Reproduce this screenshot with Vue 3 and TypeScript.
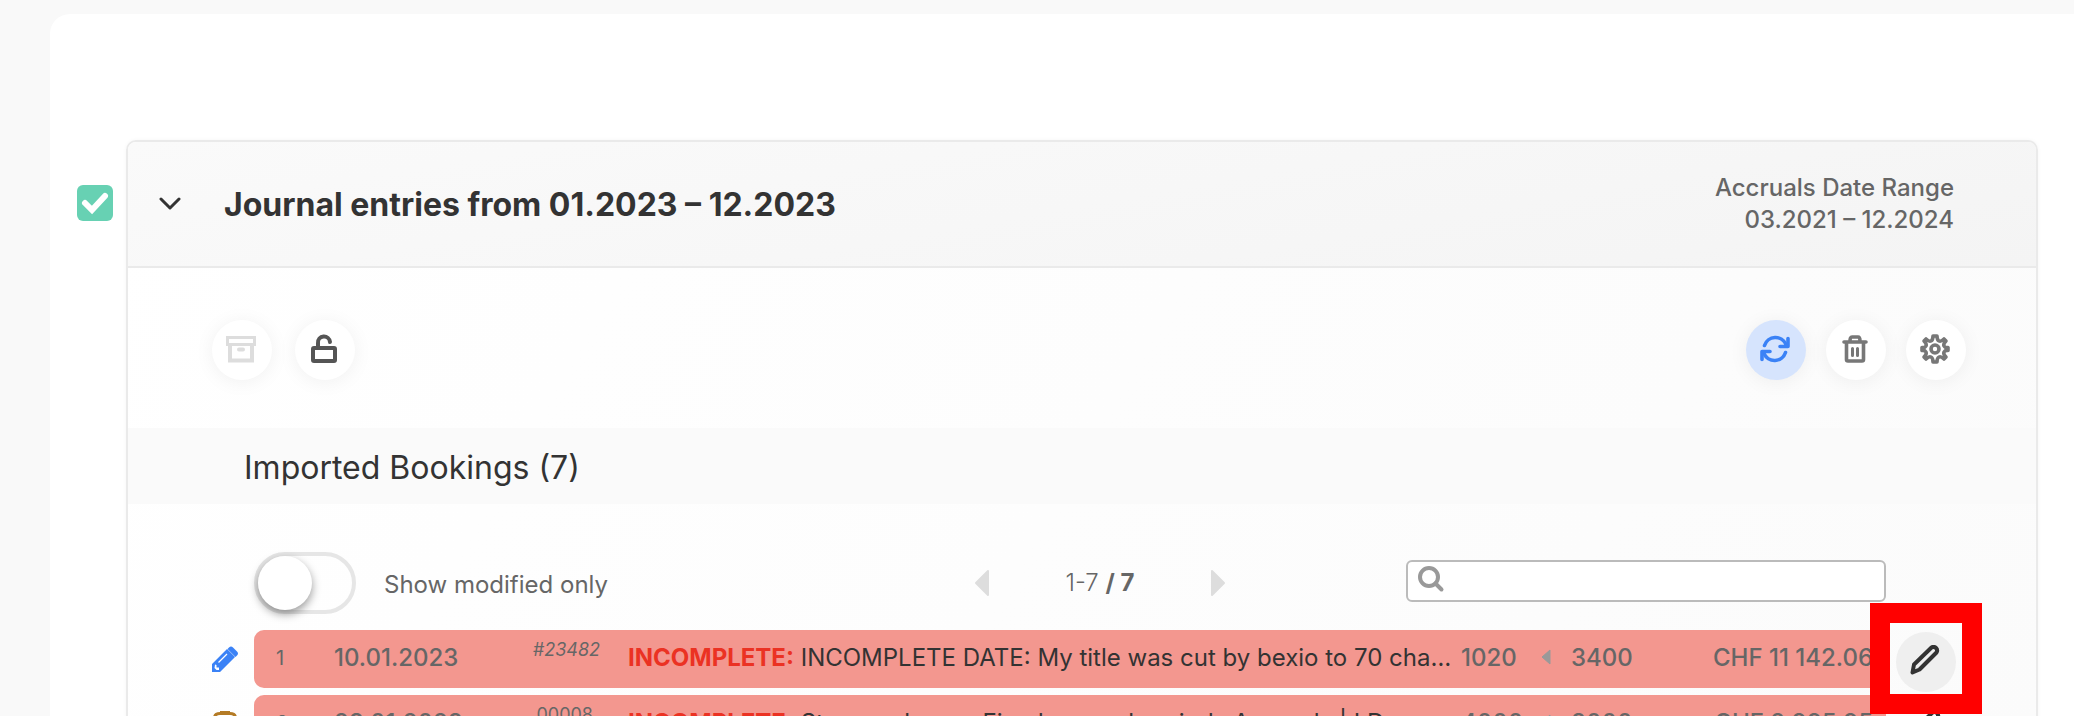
<script setup lang="ts">
import { ref } from 'vue'

interface Booking {
  id: number
  kind: 'edited' | 'pasted'
  date: string
  reference: string
  manual: boolean
  title: string
  debit: string
  credit: string
  amount: string
  highlighted: boolean
}

const selected = ref(true)
const modifiedOnly = ref(false)
const query = ref('')

const bookings: Booking[] = [
  {
    id: 1,
    kind: 'edited',
    date: '10.01.2023',
    reference: '#23482',
    manual: true,
    title: 'INCOMPLETE DATE: My title was cut by bexio to 70 characters',
    debit: '1020',
    credit: '3400',
    amount: 'CHF 11 142.06',
    highlighted: true,
  },
  {
    id: 2,
    kind: 'pasted',
    date: '28.01.2023',
    reference: '00008',
    manual: false,
    title: 'Stromrechnung Fixed accrual periods Accruals | I Demo',
    debit: '4000',
    credit: '3000',
    amount: 'CHF 2 995.95',
    highlighted: false,
  },
]
</script>

<template>
  <main class="page">
    <div class="panel">
      <label class="pick">
        <input v-model="selected" type="checkbox" aria-label="Select journal entries" />
        <svg v-if="selected" viewBox="0 0 36 36" aria-hidden="true">
          <path d="M8 18l7 7L28 11" fill="none" stroke="#fff" stroke-width="6" stroke-linecap="round" />
        </svg>
      </label>

      <section class="card">
        <header class="card-head">
          <button class="chevron" type="button" aria-label="Collapse">
            <svg width="24" height="14" viewBox="0 0 24 14">
              <path d="M3 2l9 9 9-9" fill="none" stroke="#333" stroke-width="3" stroke-linecap="round" stroke-linejoin="round" />
            </svg>
          </button>
          <h1>Journal entries from 01.2023 – 12.2023</h1>
          <p class="range">Accruals Date Range<br />03.2021 – 12.2024</p>
        </header>

        <div class="toolbar">
          <button class="round" type="button" aria-label="Archive" disabled>
            <svg width="30" height="30" viewBox="0 0 30 30" fill="none" stroke="#ddd" stroke-width="3">
              <path d="M1.500 3.500h27v7h-27z" />
              <path d="M4 10.500v16h22v-16" stroke-width="4" />
              <path d="M13 15.500h4" stroke-width="4" stroke-linecap="round" />
            </svg>
          </button>
          <button class="round lock" type="button" aria-label="Unlock">
            <svg width="30" height="30" viewBox="0 0 30 30" fill="none" stroke="#555" stroke-width="4" stroke-linecap="round" stroke-linejoin="round">
              <rect x="4" y="14" width="22" height="13" rx="1" />
              <path d="M9 13V9a6 6 0 0 1 12-1" />
            </svg>
          </button>
          <span class="spacer"></span>
          <button class="round active" type="button" aria-label="Refresh">
            <svg width="30" height="30" viewBox="0 0 30 30" fill="none" stroke="#3b82f6" stroke-width="3.600" stroke-linecap="round" stroke-linejoin="round">
              <path d="M4.500 11.500A11.500 11.500 0 0 1 26 10.500M25.500 18.500A11.500 11.500 0 0 1 4 19.500" />
              <path d="M28 4.500v8h-8M2 25.500v-8h8" />
            </svg>
          </button>
          <button class="round" type="button" aria-label="Delete">
            <svg width="30" height="30" viewBox="0 0 30 30" fill="none" stroke="#777" stroke-width="3.600" stroke-linecap="round" stroke-linejoin="round">
              <path d="M4 8h22M6.500 8.500v17q0 1.500 1.500 1.500h14q1.500 0 1.500-1.500v-17M10 7q0-4 2-4h6q2 0 2 4" />
              <path d="M12.500 14.500v7M17.500 14.500v7" stroke-width="3" />
            </svg>
          </button>
          <button class="round" type="button" aria-label="Settings">
            <svg width="30" height="30" viewBox="0 0 30 30" fill="none" stroke="#777" stroke-width="3.600" stroke-linejoin="round">
              <path d="M13 2h4q0 4 2 5t5-2l2 2q-3 3-2 5t4 1.500v3q-3-.500-4 1.500t2 5l-2 2q-3-3-5-2t-2 5h-4q0-4-2-5t-5 2l-2-2q3-3 2-5t-4-1.500v-3q3 .500 4-1.500t-2-5l2-2q3 3 5 2t2-5z" />
              <circle cx="15" cy="15" r="4" />
            </svg>
          </button>
        </div>

        <h2>Imported Bookings (7)</h2>

        <div class="filters">
          <label class="switch">
            <input v-model="modifiedOnly" type="checkbox" role="switch" />
            <span class="track"><span class="knob"></span></span>
            <span class="switch-text">Show modified only</span>
          </label>
          <nav class="pager" aria-label="Pages">
            <button type="button" aria-label="Previous page">
              <svg width="16" height="28" viewBox="0 0 16 28"><path d="M14 2v24L2 14z" fill="#ddd" stroke="#ddd" stroke-width="2" stroke-linejoin="round" /></svg>
            </button>
            <span>1-7 <b>/ 7</b></span>
            <button type="button" aria-label="Next page">
              <svg width="16" height="28" viewBox="0 0 16 28"><path d="M2 2v24l12-12z" fill="#ddd" stroke="#ddd" stroke-width="2" stroke-linejoin="round" /></svg>
            </button>
          </nav>
          <label class="search">
            <svg width="28" height="28" viewBox="0 0 28 28" fill="none" stroke="#999" stroke-width="4" stroke-linecap="round">
              <circle cx="12" cy="12" r="9" />
              <path d="M18.500 18.500l6 6" />
            </svg>
            <input v-model="query" type="search" aria-label="Search bookings" />
          </label>
        </div>

        <table>
          <colgroup>
            <col class="c-mark" /><col class="c-id" /><col class="c-date" /><col class="c-ref" /><col />
            <col class="c-debit" /><col class="c-arrow" /><col class="c-credit" /><col class="c-amount" /><col class="c-edit" />
          </colgroup>
          <tbody>
            <tr v-for="b in bookings" :key="b.id">
              <td class="mark">
                <svg v-if="b.kind === 'edited'" width="26" height="26" viewBox="0 0 26 26">
                  <path d="M0 26v-8L15 3l8 8L8 26zM17 1.500q2-2 4 0l4 4q2 2 0 4l-1.500 1.500-8-8z" fill="#3b82f6" />
                  <path d="M3 18.500l1.500.500v2.500H7V24H4.500L2.500 22z" fill="#fff" />
                  <path d="M6.500 16.500L15 8" stroke="#fff" stroke-width="1.200" />
                </svg>
                <svg v-else width="26" height="30" viewBox="0 0 26 30" fill="none" stroke="#b47b25" stroke-width="3">
                  <path d="M8 2.500Q2.500 2.500 2.500 7v18q0 3 3 3h15q3 0 3-3V7q0-4.500-5.500-4.500" />
                  <path d="M8 2h10" stroke-width="4" />
                </svg>
              </td>
              <td class="id">{{ b.id }}</td>
              <td class="figure">{{ b.date }}</td>
              <td class="ref" :class="{ manual: b.manual }">{{ b.reference }}</td>
              <td class="title"><strong>INCOMPLETE:</strong> {{ b.title }}</td>
              <td class="figure debit">{{ b.debit }}</td>
              <td class="arrow">
                <svg width="10" height="16" viewBox="0 0 10 16"><path d="M9 1v14L1 8z" fill="#999" stroke="#999" stroke-linejoin="round" /></svg>
              </td>
              <td class="figure">{{ b.credit }}</td>
              <td class="figure amount">{{ b.amount }}</td>
              <td class="edit">
                <button class="edit-btn" :class="{ highlighted: b.highlighted }" type="button" aria-label="Edit booking">
                  <svg width="30" height="30" viewBox="0 0 30 30" fill="none" stroke="#333" stroke-width="4" stroke-linejoin="round">
                    <path d="M2.500 27.500l1.500-8L21.500 2.500q2.500-1.500 4.500.500t.500 4.500L9.500 24.500z" />
                  </svg>
                </button>
              </td>
            </tr>
          </tbody>
        </table>
      </section>
    </div>
  </main>
</template>

<style>
body {
  margin: 0;
  background: #f9f9f9;
}
</style>

<style scoped>
* {
  box-sizing: border-box;
}

.page {
  height: 100vh;
  overflow: hidden;
  padding: 14px 0 0 50px;
  font: 24px/32px Inter, "Liberation Sans", sans-serif;
  color: #666;
}

.panel {
  display: flex;
  align-items: flex-start;
  gap: 13px;
  min-height: 100%;
  padding: 126px 36px 0 27px;
  background: #fff;
  border-radius: 20px 0 0 0;
}

button {
  padding: 0;
  border: 0;
  background: none;
  cursor: pointer;
}

svg {
  display: block;
  flex: none;
}

.pick {
  display: grid;
  flex: none;
  width: 36px;
  height: 36px;
  margin-top: 45px;
}

.pick input,
.pick svg {
  grid-area: 1 / 1;
  width: 36px;
  height: 36px;
  margin: 0;
}

.pick input {
  appearance: none;
  border-radius: 6px;
  background: #ddd;
}

.pick input:checked {
  background: #67d1b3;
}

.pick svg {
  pointer-events: none;
}

.card {
  flex: 1;
  min-width: 0;
  border: 2px solid #eaeaea;
  border-radius: 10px;
  background: linear-gradient(120deg, #fff, #fbfbfb);
  box-shadow: 0 0 4px rgba(0, 0, 0, 0.04);
}

.card-head {
  display: flex;
  align-items: center;
  height: 126px;
  padding: 0 82px 0 30px;
  border-bottom: 2px solid #eaeaea;
  border-radius: 8px 8px 0 0;
  background: linear-gradient(170deg, #fafafa, #f4f4f4);
}

.chevron {
  margin-right: 42px;
}

h1 {
  flex: 1;
  margin: 0;
  padding-top: 2px;
  font-size: 32px;
  font-weight: 700;
  line-height: 40px;
  color: #333;
}

.range {
  margin: 0;
  font-weight: 500;
  text-align: right;
}

.toolbar {
  display: flex;
  gap: 20px;
  padding: 52px 70px 48px 84px;
}

.spacer {
  flex: 1;
}

.round {
  display: grid;
  place-items: center;
  width: 60px;
  height: 60px;
  padding: 0 2px 2px 0;
  border-radius: 50%;
  background: #fff;
  box-shadow: 0 2px 20px rgba(0, 0, 0, 0.06);
}

.lock {
  margin-left: 3px;
}

.active {
  background: #d6e4fd;
}

h2 {
  margin: 0;
  padding: 20px 116px 16px;
  background: #fafafa;
  font-size: 32px;
  font-weight: 400;
  line-height: 40px;
  color: #333;
}

.filters {
  display: grid;
  grid-template-columns: 1fr 252px 480px;
  align-items: center;
  padding: 48px 150px 0 126px;
}

.switch {
  display: flex;
  align-items: center;
  gap: 28px;
}

.switch-text {
  padding-top: 4px;
}

.switch input {
  position: absolute;
  opacity: 0;
}

.track {
  width: 102px;
  height: 62px;
  border: 4px solid #e6e6e6;
  border-radius: 31px;
}

.knob {
  display: block;
  width: 54px;
  height: 54px;
  border-radius: 50%;
  background: #fff;
  box-shadow: 0 4px 10px rgba(0, 0, 0, 0.4);
}

.switch input:checked + .track .knob {
  margin-left: 40px;
}

.pager {
  display: flex;
  align-items: center;
  justify-content: space-between;
  margin: 0 180px 0 -180px;
  font-weight: 300;
}

.pager b {
  font-weight: 700;
}

.search {
  display: flex;
  height: 42px;
  margin-bottom: 4px;
  padding: 3px 9px;
  border: 2px solid #bbb;
  border-radius: 6px;
  background: #fff;
}

.search input {
  flex: 1;
  min-width: 0;
  border: 0;
  outline: 0;
  background: none;
  font: inherit;
}

table {
  width: calc(100% - 154px);
  margin: 9px 70px 0 84px;
  table-layout: fixed;
  border-spacing: 0 7px;
}

.c-mark { width: 42px; }
.c-id { width: 80px; }
.c-date { width: 166px; }
.c-ref { width: 100px; }
.c-debit { width: 88px; }
.c-arrow { width: 30px; }
.c-credit { width: 90px; }
.c-amount { width: 225px; }
.c-edit { width: 80px; }

td {
  height: 58px;
  padding: 12px 0 14px;
  background: #f3978f;
  vertical-align: top;
  white-space: nowrap;
}

.mark,
.edit {
  background: none;
}

.mark {
  padding-top: 16px;
}

.id {
  padding-left: 22px;
  border-radius: 10px 0 0 10px;
  font-size: 20px;
}

.figure {
  font-weight: 500;
}

.ref {
  padding-top: 4px;
  padding-right: 7px;
  font-size: 18px;
  text-align: right;
}

.manual {
  padding-right: 0;
  font-style: italic;
}

.title {
  overflow: hidden;
  padding-left: 28px;
  text-overflow: ellipsis;
  color: #333;
}

strong {
  font-weight: 700;
  color: #eb3223;
}

.debit {
  padding-left: 8px;
}

.arrow {
  padding-top: 19px;
}

.amount {
  padding-right: 13px;
  border-radius: 0 10px 10px 0;
  text-align: right;
}

.edit {
  padding: 2px 0 0 10px;
}

.edit-btn {
  display: grid;
  place-items: center;
  position: relative;
  width: 60px;
  height: 56px;
}

.highlighted {
  height: 60px;
  margin-bottom: -4px;
  padding: 0 2px 4px 0;
  border-radius: 50%;
  background: #efefef;
}

.highlighted::after {
  content: "";
  position: absolute;
  inset: -29px -26px -22px;
  z-index: 1;
  border: 20px solid #f00;
}
</style>
